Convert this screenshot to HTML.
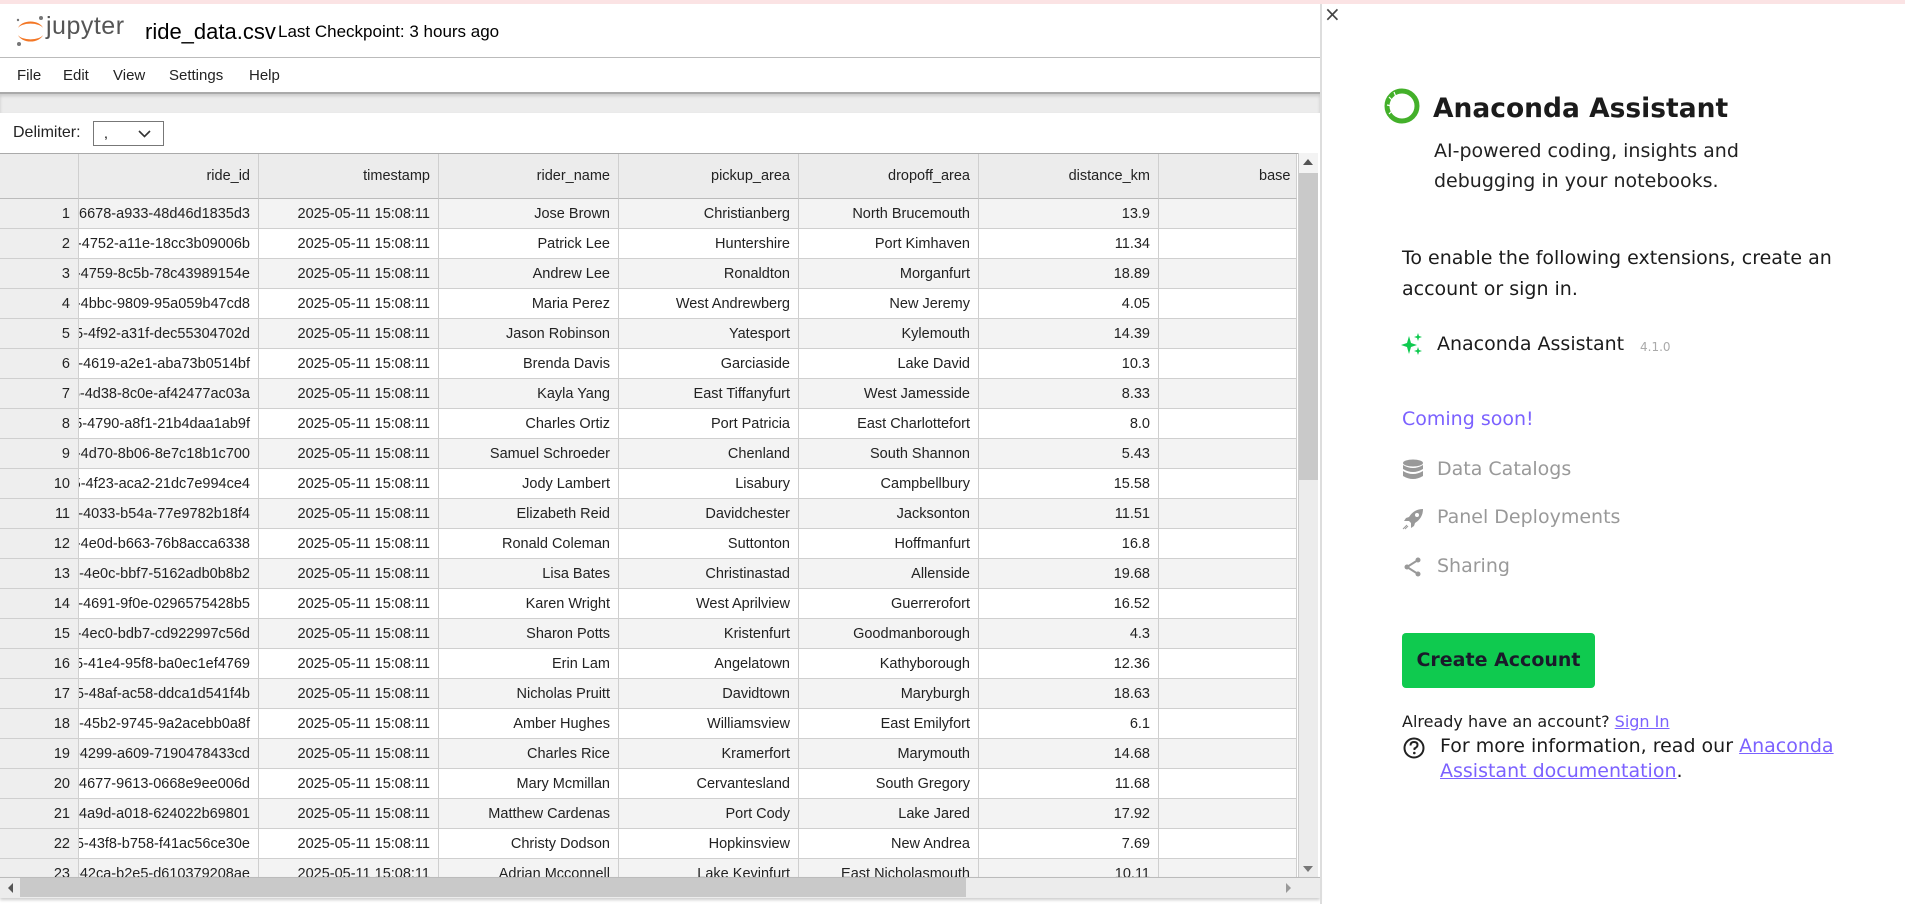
<!DOCTYPE html>
<html><head><meta charset="utf-8">
<style>
*{box-sizing:border-box;margin:0;padding:0}
body{width:1905px;height:904px;overflow:hidden;background:#fff;font-family:"Liberation Sans",Arial,sans-serif;position:relative}
.abs{position:absolute}
.top{left:0;top:0;width:1905px;height:4px;background:#fbe3e4}
.menu span{margin-right:0;position:absolute;top:0}
.tbl{left:0;top:153px;width:1298px;height:724px;overflow:hidden;border-top:1px solid #aaa}
.row{display:flex;height:30px;font-size:14.5px;color:#222}
.c{flex:0 0 180px;border-right:1px solid #cfcfcf;border-bottom:1px solid #cfcfcf;display:flex;justify-content:flex-end;align-items:center;padding-right:8px;overflow:hidden;white-space:nowrap}
.c0{flex:0 0 79px;background:#eee}
.cl{flex:0 0 138px}
.hdr{height:45px}
.hdr .c{background:#ececec;border-bottom:1px solid #bbb}
.row:nth-child(even) .c{background:#f3f3f3}
.row:nth-child(even) .c0,.row .c0{background:#eee}
.hdr .c0{background:#ececec}
.rp{font-family:"DejaVu Sans","Liberation Sans",sans-serif}
a{color:#7b61ff}
</style></head><body>
<div class="abs top"></div>
<!-- header -->
<svg class="abs" style="left:14px;top:14px" width="34" height="34" viewBox="0 0 34 34">
<path d="M4 14 A13 9 0 0 1 29 14 A13 6 0 0 0 4 14Z" fill="#f37726"/>
<path d="M4 21 A13 9 0 0 0 29 21 A13 6 0 0 1 4 21Z" fill="#f37726"/>
<circle cx="27" cy="4" r="2" fill="#767677"/><circle cx="5" cy="30" r="2" fill="#767677"/><circle cx="4" cy="6" r="1.2" fill="#767677"/>
</svg>
<div class="abs" style="left:46px;top:12px;font-size:25px;color:#555;letter-spacing:0.5px">jupyter</div>
<div class="abs" style="left:145px;top:19px;font-size:22px;color:#000">ride_data.csv</div>
<div class="abs" style="left:278px;top:22px;font-size:17px;color:#000">Last Checkpoint: 3 hours ago</div>
<div class="abs" style="left:0;top:57px;width:1320px;height:1px;background:#bbb"></div>
<div class="abs menu" style="left:0;top:67px;font-size:15px;color:#222">
<span style="left:17px">File</span><span style="left:63px">Edit</span><span style="left:113px">View</span><span style="left:169px">Settings</span><span style="left:249px">Help</span></div>
<div class="abs" style="left:0;top:92px;width:1320px;height:21px;background:#ececec;border-top:2px solid #aaa;box-shadow:inset 0 2px 3px rgba(0,0,0,.15)"></div>
<div class="abs" style="left:13px;top:124px;font-size:16px;color:#222">Delimiter:</div>
<div class="abs" style="left:93px;top:121px;width:71px;height:25px;border:1px solid #777;font-size:14px;padding-left:10px;line-height:22px">,<svg style="position:absolute;right:12px;top:8px" width="13" height="8"><path d="M1 1 L6.5 6.5 L12 1" stroke="#333" stroke-width="1.6" fill="none"/></svg></div>
<!-- table -->
<div class="abs tbl">
<div class="row hdr"><div class="c c0"></div><div class="c">ride_id</div><div class="c">timestamp</div><div class="c">rider_name</div><div class="c">pickup_area</div><div class="c">dropoff_area</div><div class="c">distance_km</div><div class="c cl" style="padding-right:0;justify-content:flex-start;padding-left:100px">base</div></div>
<div class="row"><div class="c c0">1</div><div class="c">a4c5-6678-a933-48d46d1835d3</div><div class="c">2025-05-11 15:08:11</div><div class="c">Jose Brown</div><div class="c">Christianberg</div><div class="c">North Brucemouth</div><div class="c">13.9</div><div class="c cl"></div></div>
<div class="row"><div class="c c0">2</div><div class="c">a4c5-4752-a11e-18cc3b09006b</div><div class="c">2025-05-11 15:08:11</div><div class="c">Patrick Lee</div><div class="c">Huntershire</div><div class="c">Port Kimhaven</div><div class="c">11.34</div><div class="c cl"></div></div>
<div class="row"><div class="c c0">3</div><div class="c">a4c5-4759-8c5b-78c43989154e</div><div class="c">2025-05-11 15:08:11</div><div class="c">Andrew Lee</div><div class="c">Ronaldton</div><div class="c">Morganfurt</div><div class="c">18.89</div><div class="c cl"></div></div>
<div class="row"><div class="c c0">4</div><div class="c">a4c5-4bbc-9809-95a059b47cd8</div><div class="c">2025-05-11 15:08:11</div><div class="c">Maria Perez</div><div class="c">West Andrewberg</div><div class="c">New Jeremy</div><div class="c">4.05</div><div class="c cl"></div></div>
<div class="row"><div class="c c0">5</div><div class="c">a4c5-4f92-a31f-dec55304702d</div><div class="c">2025-05-11 15:08:11</div><div class="c">Jason Robinson</div><div class="c">Yatesport</div><div class="c">Kylemouth</div><div class="c">14.39</div><div class="c cl"></div></div>
<div class="row"><div class="c c0">6</div><div class="c">a4c5-4619-a2e1-aba73b0514bf</div><div class="c">2025-05-11 15:08:11</div><div class="c">Brenda Davis</div><div class="c">Garciaside</div><div class="c">Lake David</div><div class="c">10.3</div><div class="c cl"></div></div>
<div class="row"><div class="c c0">7</div><div class="c">a4c5-4d38-8c0e-af42477ac03a</div><div class="c">2025-05-11 15:08:11</div><div class="c">Kayla Yang</div><div class="c">East Tiffanyfurt</div><div class="c">West Jamesside</div><div class="c">8.33</div><div class="c cl"></div></div>
<div class="row"><div class="c c0">8</div><div class="c">a4c5-4790-a8f1-21b4daa1ab9f</div><div class="c">2025-05-11 15:08:11</div><div class="c">Charles Ortiz</div><div class="c">Port Patricia</div><div class="c">East Charlottefort</div><div class="c">8.0</div><div class="c cl"></div></div>
<div class="row"><div class="c c0">9</div><div class="c">a4c5-4d70-8b06-8e7c18b1c700</div><div class="c">2025-05-11 15:08:11</div><div class="c">Samuel Schroeder</div><div class="c">Chenland</div><div class="c">South Shannon</div><div class="c">5.43</div><div class="c cl"></div></div>
<div class="row"><div class="c c0">10</div><div class="c">a4c5-4f23-aca2-21dc7e994ce4</div><div class="c">2025-05-11 15:08:11</div><div class="c">Jody Lambert</div><div class="c">Lisabury</div><div class="c">Campbellbury</div><div class="c">15.58</div><div class="c cl"></div></div>
<div class="row"><div class="c c0">11</div><div class="c">a4c5-4033-b54a-77e9782b18f4</div><div class="c">2025-05-11 15:08:11</div><div class="c">Elizabeth Reid</div><div class="c">Davidchester</div><div class="c">Jacksonton</div><div class="c">11.51</div><div class="c cl"></div></div>
<div class="row"><div class="c c0">12</div><div class="c">a4c5-4e0d-b663-76b8acca6338</div><div class="c">2025-05-11 15:08:11</div><div class="c">Ronald Coleman</div><div class="c">Suttonton</div><div class="c">Hoffmanfurt</div><div class="c">16.8</div><div class="c cl"></div></div>
<div class="row"><div class="c c0">13</div><div class="c">a4c5-4e0c-bbf7-5162adb0b8b2</div><div class="c">2025-05-11 15:08:11</div><div class="c">Lisa Bates</div><div class="c">Christinastad</div><div class="c">Allenside</div><div class="c">19.68</div><div class="c cl"></div></div>
<div class="row"><div class="c c0">14</div><div class="c">a4c5-4691-9f0e-0296575428b5</div><div class="c">2025-05-11 15:08:11</div><div class="c">Karen Wright</div><div class="c">West Aprilview</div><div class="c">Guerrerofort</div><div class="c">16.52</div><div class="c cl"></div></div>
<div class="row"><div class="c c0">15</div><div class="c">a4c5-4ec0-bdb7-cd922997c56d</div><div class="c">2025-05-11 15:08:11</div><div class="c">Sharon Potts</div><div class="c">Kristenfurt</div><div class="c">Goodmanborough</div><div class="c">4.3</div><div class="c cl"></div></div>
<div class="row"><div class="c c0">16</div><div class="c">a4c5-41e4-95f8-ba0ec1ef4769</div><div class="c">2025-05-11 15:08:11</div><div class="c">Erin Lam</div><div class="c">Angelatown</div><div class="c">Kathyborough</div><div class="c">12.36</div><div class="c cl"></div></div>
<div class="row"><div class="c c0">17</div><div class="c">a4c5-48af-ac58-ddca1d541f4b</div><div class="c">2025-05-11 15:08:11</div><div class="c">Nicholas Pruitt</div><div class="c">Davidtown</div><div class="c">Maryburgh</div><div class="c">18.63</div><div class="c cl"></div></div>
<div class="row"><div class="c c0">18</div><div class="c">a4c5-45b2-9745-9a2acebb0a8f</div><div class="c">2025-05-11 15:08:11</div><div class="c">Amber Hughes</div><div class="c">Williamsview</div><div class="c">East Emilyfort</div><div class="c">6.1</div><div class="c cl"></div></div>
<div class="row"><div class="c c0">19</div><div class="c">a4c5-4299-a609-7190478433cd</div><div class="c">2025-05-11 15:08:11</div><div class="c">Charles Rice</div><div class="c">Kramerfort</div><div class="c">Marymouth</div><div class="c">14.68</div><div class="c cl"></div></div>
<div class="row"><div class="c c0">20</div><div class="c">a4c5-4677-9613-0668e9ee006d</div><div class="c">2025-05-11 15:08:11</div><div class="c">Mary Mcmillan</div><div class="c">Cervantesland</div><div class="c">South Gregory</div><div class="c">11.68</div><div class="c cl"></div></div>
<div class="row"><div class="c c0">21</div><div class="c">a4c5-4a9d-a018-624022b69801</div><div class="c">2025-05-11 15:08:11</div><div class="c">Matthew Cardenas</div><div class="c">Port Cody</div><div class="c">Lake Jared</div><div class="c">17.92</div><div class="c cl"></div></div>
<div class="row"><div class="c c0">22</div><div class="c">a4c5-43f8-b758-f41ac56ce30e</div><div class="c">2025-05-11 15:08:11</div><div class="c">Christy Dodson</div><div class="c">Hopkinsview</div><div class="c">New Andrea</div><div class="c">7.69</div><div class="c cl"></div></div>
<div class="row"><div class="c c0">23</div><div class="c">a4c5-42ca-b2e5-d610379208ae</div><div class="c">2025-05-11 15:08:11</div><div class="c">Adrian Mcconnell</div><div class="c">Lake Kevinfurt</div><div class="c">East Nicholasmouth</div><div class="c">10.11</div><div class="c cl"></div></div>
</div>
<!-- scrollbars -->
<div class="abs" style="left:1298px;top:153px;width:20px;height:724px;background:#ececec;border-left:1px solid #ccc"></div>
<div class="abs" style="left:1299px;top:153px;width:19px;height:20px;background:#f3f3f3"></div>
<div class="abs" style="left:1303px;top:159px;width:0;height:0;border-left:5px solid transparent;border-right:5px solid transparent;border-bottom:6px solid #555"></div>
<div class="abs" style="left:1299px;top:173px;width:19px;height:307px;background:#c9c9c9"></div>
<div class="abs" style="left:1303px;top:866px;width:0;height:0;border-left:5px solid transparent;border-right:5px solid transparent;border-top:6px solid #777"></div>
<div class="abs" style="left:0;top:877px;width:1320px;height:21px;background:#ececec;border-top:1px solid #bbb;box-shadow:0 2px 3px rgba(0,0,0,.2)"></div>
<div class="abs" style="left:20px;top:878px;width:946px;height:19px;background:#c9c9c9"></div>
<div class="abs" style="left:8px;top:883px;width:0;height:0;border-top:5px solid transparent;border-bottom:5px solid transparent;border-right:5px solid #555"></div>
<div class="abs" style="left:1286px;top:883px;width:0;height:0;border-top:5px solid transparent;border-bottom:5px solid transparent;border-left:5px solid #999"></div>
<div class="abs" style="left:1320px;top:4px;width:2px;height:900px;background:#ddd"></div>
<!-- right panel -->
<div class="abs" style="left:1324px;top:2px;font-size:20px;color:#444;font-family:'DejaVu Sans',sans-serif">×</div>
<svg class="abs" style="left:1383px;top:87px" width="38" height="38" viewBox="0 0 38 38">
<circle cx="19" cy="19" r="15" fill="none" stroke="#43b02a" stroke-width="5"/>
<path d="M6 10 L10 14 M4 18 L9 19 M6 27 L10 23 M11 5 L13 10" stroke="#fff" stroke-width="1.2"/>
</svg>
<div class="abs rp" style="left:1433px;top:93px;font-size:26.5px;font-weight:bold;color:#1b1b1b">Anaconda Assistant</div>
<div class="abs rp" style="left:1434px;top:136px;font-size:19px;line-height:30px;color:#222">AI-powered coding, insights and<br>debugging in your notebooks.</div>
<div class="abs rp" style="left:1402px;top:243px;font-size:19px;line-height:31px;color:#1b1b1b">To enable the following extensions, create an<br>account or sign in.</div>
<svg class="abs" style="left:1401px;top:333px" width="22" height="22" viewBox="0 0 22 22"><path d="M8 3 L10 10 L16 12 L10 14 L8 21 L6 14 L0 12 L6 10Z M17 0 L18 3 L21 4 L18 5 L17 8 L16 5 L13 4 L16 3Z M17 14 L18 17 L21 18 L18 19 L17 22 L16 19 L13 18 L16 17Z" fill="#0fca4f"/></svg>
<div class="abs rp" style="left:1437px;top:333px;font-size:19px;color:#1b1b1b">Anaconda Assistant</div>
<div class="abs rp" style="left:1640px;top:340px;font-size:12px;color:#aaa">4.1.0</div>
<div class="abs rp" style="left:1402px;top:408px;font-size:19px;color:#7b61ff">Coming soon!</div>
<svg class="abs" style="left:1402px;top:459px" width="22" height="22" viewBox="0 0 22 22"><g fill="#999"><ellipse cx="11" cy="4" rx="10" ry="3.5"/><path d="M1 6 Q11 12 21 6 V10 Q11 16 1 10Z"/><path d="M1 12 Q11 18 21 12 V17 Q11 23 1 17Z"/></g></svg>
<div class="abs rp" style="left:1437px;top:458px;font-size:19px;color:#999">Data Catalogs</div>
<svg class="abs" style="left:1402px;top:508px" width="22" height="22" viewBox="0 0 22 22"><path d="M21 1 Q12 1 7 9 L4 10 L2 13 L7 13 L9 15 L9 20 L12 18 L13 15 Q21 10 21 1Z" fill="#999"/><circle cx="15" cy="7" r="2" fill="#fff"/><path d="M1 21 L5 17 M3 21 L6 18" stroke="#999"/></svg>
<div class="abs rp" style="left:1437px;top:506px;font-size:19px;color:#999">Panel Deployments</div>
<svg class="abs" style="left:1404px;top:557px" width="18" height="20" viewBox="0 0 18 20"><circle cx="14" cy="3" r="2.5" fill="#999"/><circle cx="3" cy="10" r="2.5" fill="#999"/><circle cx="14" cy="17" r="2.5" fill="#999"/><path d="M14 3 L3 10 L14 17" stroke="#999" stroke-width="2" fill="none"/></svg>
<div class="abs rp" style="left:1437px;top:555px;font-size:19px;color:#999">Sharing</div>
<div class="abs rp" style="left:1402px;top:633px;width:193px;height:55px;background:#0fca4f;border-radius:4px;font-size:19px;font-weight:bold;color:#1a1a2a;text-align:center;line-height:55px">Create Account</div>
<div class="abs rp" style="left:1402px;top:712px;font-size:16px;color:#1b1b1b">Already have an account? <a href="#">Sign In</a></div>
<svg class="abs" style="left:1403px;top:737px" width="22" height="22" viewBox="0 0 22 22"><circle cx="11" cy="11" r="9.5" fill="none" stroke="#222" stroke-width="2"/><path d="M7.5 8.5 Q7.5 5 11 5 Q14.5 5 14.5 8 Q14.5 10 11.5 11.5 V13" stroke="#222" stroke-width="2" fill="none"/><circle cx="11.3" cy="16" r="1.3" fill="#222"/></svg>
<div class="abs rp" style="left:1440px;top:734px;font-size:19px;line-height:25px;color:#1b1b1b">For more information, read our <a href="#">Anaconda</a><br><a href="#">Assistant documentation</a>.</div>
</body></html>
